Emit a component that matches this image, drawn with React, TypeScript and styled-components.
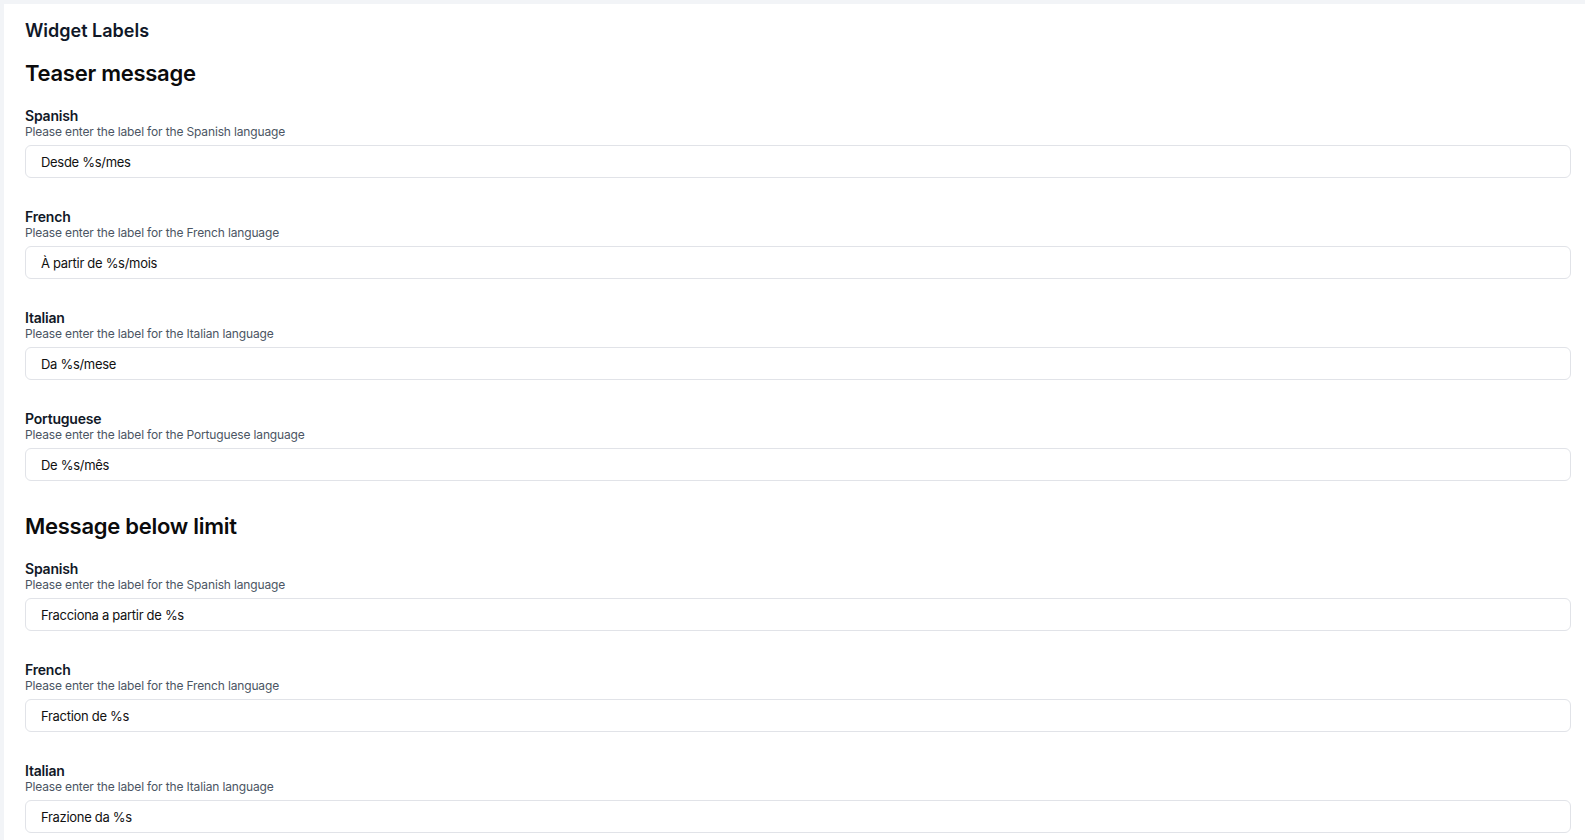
import React from "react";
import styled, { createGlobalStyle } from "styled-components";

const GlobalStyle = createGlobalStyle`
  html, body {
    margin: 0;
    padding: 0;
    background: #f2f4f7;
    font-family: Inter, "Noto Sans", Arial, sans-serif;
  }
  * { box-sizing: border-box; }
`;

const Panel = styled.main`
  margin: 4px 0 0 4px;
  background: #ffffff;
  padding: 13px 14px 40px 21px;
  min-height: 836px;
`;

const PageTitle = styled.h2`
  margin: 0;
  font-size: 18px;
  line-height: 28px;
  font-weight: 600;
  color: #101828;
`;

const Section = styled.section<{ $first?: boolean }>`
  display: flex;
  flex-direction: column;
  gap: 32px;
  margin-top: ${(p) => (p.$first ? "12px" : "29px")};
`;

const SectionTitle = styled.h3`
  margin: 0 0 -12px 0;
  font-size: 22px;
  line-height: 32px;
  font-weight: 600;
  letter-spacing: -0.27px;
  color: #0b0b0c;
`;

const Field = styled.div`
  display: flex;
  flex-direction: column;
`;

const Label = styled.label`
  font-size: 14px;
  line-height: 14px;
  font-weight: 600;
  letter-spacing: -0.2px;
  color: #111827;
`;

const Help = styled.span`
  font-size: 12px;
  line-height: 14px;
  letter-spacing: -0.15px;
  color: #4b5563;
  margin: 2px 0 6px;
`;

const TextInput = styled.input`
  width: 100%;
  height: 33px;
  border: 1px solid #e1e3e8;
  border-radius: 6px;
  padding: 0 15px;
  font-family: Inter, "Noto Sans", Arial, sans-serif;
  font-size: 13px;
  letter-spacing: -0.3px;
  color: #111111;
  background: #ffffff;
  outline: none;
`;

type Entry = { lang: string; value: string };

const sections: { title: string; entries: Entry[] }[] = [
  {
    title: "Teaser message",
    entries: [
      { lang: "Spanish", value: "Desde %s/mes" },
      { lang: "French", value: "À partir de %s/mois" },
      { lang: "Italian", value: "Da %s/mese" },
      { lang: "Portuguese", value: "De %s/mês" },
    ],
  },
  {
    title: "Message below limit",
    entries: [
      { lang: "Spanish", value: "Fracciona a partir de %s" },
      { lang: "French", value: "Fraction de %s" },
      { lang: "Italian", value: "Frazione da %s" },
      { lang: "Portuguese", value: "Fracione a partir de %s" },
    ],
  },
];

export default function App() {
  return (
    <>
      <GlobalStyle />
      <Panel>
        <PageTitle>Widget Labels</PageTitle>
        {sections.map((s, si) => (
          <Section key={s.title} $first={si === 0}>
            <SectionTitle>{s.title}</SectionTitle>
            {s.entries.map((e) => (
              <Field key={e.lang}>
                <Label>{e.lang}</Label>
                <Help>Please enter the label for the {e.lang} language</Help>
                <TextInput defaultValue={e.value} readOnly />
              </Field>
            ))}
          </Section>
        ))}
      </Panel>
    </>
  );
}
